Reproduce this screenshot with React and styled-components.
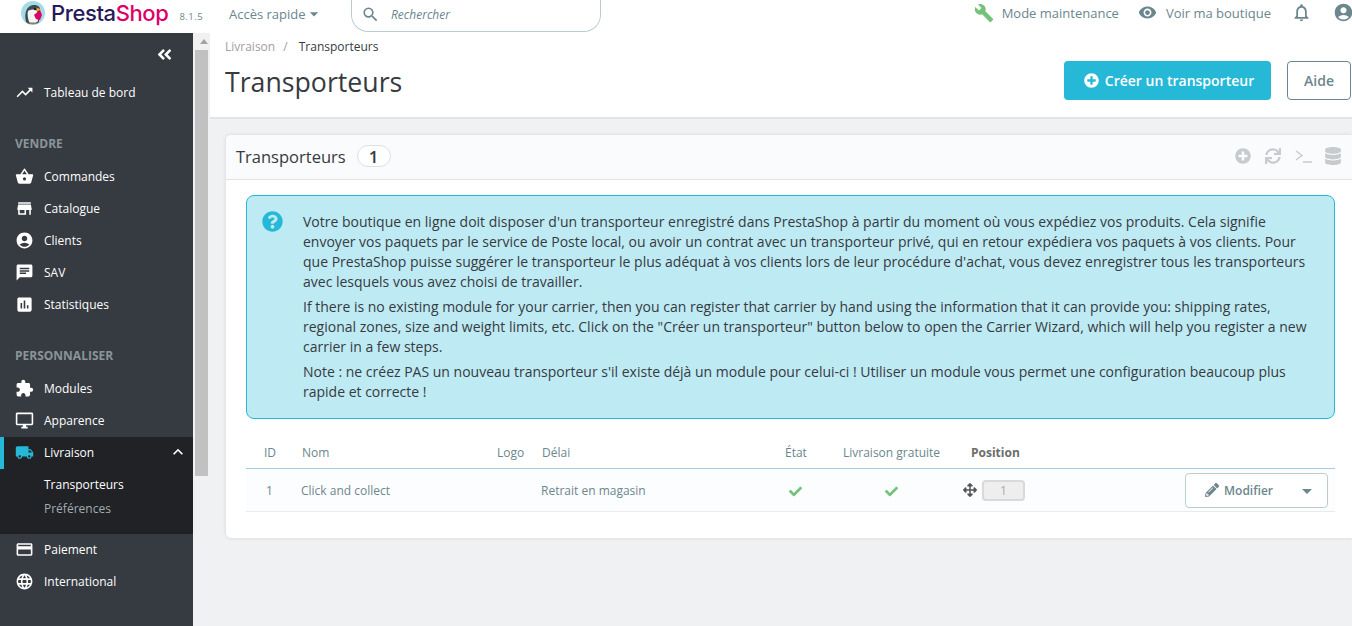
import React from "react";
import styled, { createGlobalStyle } from "styled-components";
import {
  MdTrendingUp,
  MdShoppingBasket,
  MdStore,
  MdAccountCircle,
  MdAssessment,
  MdExtension,
  MdOutlineDesktopWindows,
  MdLocalShipping,
  MdCreditCard,
  MdLanguage,
  MdBuild,
  MdVisibility,
  MdNotificationsNone,
  MdKeyboardArrowUp,
  MdSearch,
  MdArrowDropDown,
  MdChat,
} from "react-icons/md";
import {
  FaAngleDoubleLeft,
  FaPlusCircle,
  FaQuestionCircle,
  FaSync,
  FaDatabase,
  FaPencilAlt,
  FaCheck,
  FaArrowsAlt,
} from "react-icons/fa";

const GlobalStyle = createGlobalStyle`
  html, body {
    margin: 0;
    height: 100%;
    overflow: hidden;
    background: #eff1f2;
  }
  body {
    font-family: "Open Sans", "Liberation Sans", sans-serif;
    font-size: 12.5px;
    color: #363a41;
  }
  * { box-sizing: border-box; }
`;

const Page = styled.div`
  width: 1352px;
  height: 626px;
  display: flex;
  flex-direction: column;
  overflow: hidden;
`;

/* top bar */
const Header = styled.header`
  height: 33px;
  flex: none;
  background: #fff;
  display: flex;
  align-items: center;
  position: relative;
`;

const Logo = styled.div`
  width: 229px;
  flex: none;
  padding-left: 21px;
  margin-top: -8px;
  display: flex;
  align-items: center;
`;

const LogoName = styled.span`
  font-family: "Inter", "Open Sans", sans-serif;
  font-size: 22px;
  font-weight: 500;
  letter-spacing: -0.4px;
  color: #251b5b;
  margin-left: 6px;
  line-height: 28px;
  span { color: #df0067; }
`;

const Version = styled.span`
  font-size: 9.5px;
  letter-spacing: 0.5px;
  color: #6c868e;
  margin-left: 11px;
  margin-top: 7px;
`;

const QuickAccess = styled.div`
  width: 122px;
  flex: none;
  font-size: 13px;
  color: #6c868e;
  display: flex;
  align-items: center;
  margin-top: -6px;
  svg { margin-left: -2px; }
`;

const SearchBox = styled.div`
  width: 250px;
  height: 33px;
  flex: none;
  margin-top: -3px;
  border: 1px solid #bbcdd2;
  border-top: none;
  border-radius: 0 0 17px 17px;
  display: flex;
  align-items: center;
  padding-left: 9px;
  gap: 11px;
  font-size: 12px;
  font-style: italic;
  color: #6c868e;
  svg { font-size: 19px; }
`;

const HeaderRight = styled.div`
  margin-left: auto;
  display: flex;
  align-items: center;
  margin-top: -8px;
`;

const HeaderLink = styled.div`
  display: flex;
  align-items: center;
  gap: ${(p) => p.$gap || 8}px;
  margin-right: ${(p) => p.$right || 0}px;
  color: #6c868e;
  font-size: 13px;
  white-space: nowrap;
`;

/* body */
const Body = styled.div`
  flex: 1;
  display: flex;
  min-height: 0;
`;

const Sidebar = styled.nav`
  width: 193px;
  flex: none;
  background: #363a41;
  color: #fff;
  padding-top: 11px;
`;

const Collapse = styled.div`
  height: 20px;
  display: flex;
  justify-content: flex-end;
  align-items: center;
  padding-right: 20px;
  font-size: 17px;
  margin-bottom: 13px;
`;

const Item = styled.div`
  height: 32px;
  padding: 0 0 2px 16px;
  display: flex;
  align-items: center;
  font-size: 12px;
  color: #fff;
  position: relative;
  svg.main { font-size: 19px; margin-right: 10px; flex: none; margin-left: -1px; }
  ${(p) =>
    p.$active &&
    `
    background: #202226;
    border-left: 4px solid #25b9d7;
    padding-left: 12px;
    svg.main { color: #25b9d7; }
  `}
`;

const SectionTitle = styled.div`
  font-size: 12px;
  font-weight: 700;
  color: #8a9599;
  padding-left: 15px;
  line-height: 16px;
  margin: 27px 0 9px;
`;

const Chevron = styled(MdKeyboardArrowUp)`
  position: absolute;
  right: 5px;
  top: 5px;
  font-size: 20px;
`;

const SubMenu = styled.div`
  background: #202226;
  height: 65px;
  padding-top: 4px;
`;

const SubItem = styled.div`
  height: 24px;
  line-height: 24px;
  padding-left: 44px;
  font-size: 12px;
  color: ${(p) => (p.$current ? "#fff" : "#a2aeb1")};
`;

const TrackColumn = styled.div`
  width: 17px;
  flex: none;
  background: linear-gradient(#f1f1f1 0, #f1f1f1 85px, #eff1f2 85px);
`;

const ScrollArrow = styled.div`
  width: 0;
  height: 0;
  margin: 6px 0 0 7px;
  border-left: 4px solid transparent;
  border-right: 4px solid transparent;
  border-bottom: 5px solid #a3a3a3;
`;

const ScrollThumb = styled.div`
  width: 13px;
  height: 426px;
  margin: 6px 0 0 2px;
  background: #c1c1c1;
`;

const Main = styled.main`
  flex: 1;
  min-width: 0;
  display: flex;
  flex-direction: column;
`;

const PageHead = styled.div`
  height: 86px;
  flex: none;
  background: #fff;
  border-bottom: 2px solid #e2e4e6;
  padding: 5px 0 0 15px;
  position: relative;
`;

const Breadcrumb = styled.div`
  font-size: 12px;
  line-height: 17px;
  color: #a79c9c;
  span { margin: 0 8px 0 8px; }
  b { font-weight: 400; color: #363a41; }
`;

const PageTitle = styled.h1`
  margin: 8px 0 0;
  font-size: 26.7px;
  line-height: 38px;
  font-weight: 400;
  color: #363a41;
`;

const HeadActions = styled.div`
  position: absolute;
  top: 28px;
  right: 1px;
  display: flex;
  gap: 16px;
`;

const PrimaryButton = styled.div`
  width: 207px;
  height: 39px;
  padding-left: 3px;
  background: #25b9d7;
  color: #fff;
  border-radius: 4px;
  display: flex;
  align-items: center;
  justify-content: center;
  gap: 6px;
  font-size: 14px;
  font-weight: 600;
  svg { font-size: 15px; }
`;

const OutlineButton = styled.div`
  width: 64px;
  height: 39px;
  background: #fff;
  border: 1px solid #6c868e;
  border-radius: 4px;
  display: flex;
  align-items: center;
  justify-content: center;
  color: #6c868e;
  font-size: 14px;
  font-weight: 600;
`;

const Content = styled.div`
  padding: 16px 0 0 16px;
`;

const Panel = styled.section`
  height: 403px;
  background: #fff;
  border-radius: 5px 0 0 5px;
  box-shadow: 0 0 4px rgba(0, 0, 0, 0.12);
  overflow: hidden;
`;

const PanelHeading = styled.div`
  height: 45px;
  background: #fafbfc;
  border-bottom: 1px solid #dfe3e6;
  display: flex;
  align-items: center;
  padding: 0 10px 2px;
`;

const PanelTitle = styled.span`
  font-size: 16.5px;
  color: #363a41;
`;

const Badge = styled.span`
  margin-left: 11px;
  height: 22px;
  width: 34px;
  border: 1px solid #dfdfdf;
  border-radius: 11px;
  background: #fff;
  font-size: 17px;
  font-weight: 600;
  display: flex;
  align-items: center;
  justify-content: center;
`;

const PanelTools = styled.div`
  margin-left: auto;
  display: flex;
  align-items: center;
  color: #c8cbcd;
  gap: 14px;
`;

const PromptIcon = styled.svg`
  width: 17px;
  height: 14px;
  margin-right: -2px;
  fill: none;
  stroke: #c8cbcd;
  stroke-width: 1.4;
`;

const PanelBody = styled.div`
  padding: 15px 17px 0 20px;
`;

const Alert = styled.div`
  height: 224px;
  background: #beeaf3;
  border: 1px solid #25b9d7;
  border-radius: 8px;
  padding: 16px 16px 0 56px;
  position: relative;
  font-size: 14px;
  line-height: 20px;
  color: #363a41;
  p { margin: 0 0 5px; }
`;

const AlertIcon = styled(FaQuestionCircle)`
  position: absolute;
  left: 15px;
  top: 15px;
  font-size: 21px;
  color: #25b9d7;
`;

const Table = styled.div`
  margin-top: 17px;
`;

const Row = styled.div`
  display: grid;
  grid-template-columns: 56px 195px 45px 210px 88px 130px 1fr;
  align-items: center;
  font-size: 12px;
  color: #6c868e;
`;

const HeadRow = styled(Row)`
  height: 33px;
  border-bottom: 1px solid #a3cfe2;
`;

const DataRow = styled(Row)`
  height: 43px;
  background: #fcfdfe;
  border-bottom: 1px solid #e8eaec;
`;

const Cell = styled.div`
  padding-left: ${(p) => p.$left || 0}px;
  margin-left: ${(p) => p.$shift || 0}px;
  white-space: nowrap;
`;

const StrongCell = styled(Cell)`
  font-weight: 700;
  color: #6c6c6c;
`;

const Check = styled(FaCheck)`
  display: block;
  color: #72c279;
  font-size: 13px;
  margin-top: 2px;
`;

const PositionCell = styled.div`
  display: flex;
  align-items: center;
`;

const PositionWrap = styled.div`
  display: flex;
  align-items: center;
  gap: 5px;
  color: #555;
  margin-left: -7px;
  svg { font-size: 14px; }
`;

const PositionBox = styled.div`
  width: 43px;
  height: 21px;
  background: #eee;
  border: 2px solid #d9d9d9;
  border-radius: 4px;
  display: flex;
  align-items: center;
  justify-content: center;
  font-size: 12px;
  color: #aaa;
`;

const EditButton = styled.div`
  width: 143px;
  height: 35px;
  margin-left: auto;
  margin-right: 7px;
  background: #fff;
  border: 1px solid #bbcdd2;
  border-radius: 4px;
  display: flex;
  align-items: center;
  padding-left: 19px;
  gap: 5px;
  font-size: 12px;
  font-weight: 600;
  color: #6c868e;
  position: relative;
  svg { font-size: 14px; }
`;

const EditCaret = styled.span`
  position: absolute;
  right: 15px;
  top: 15px;
  border-left: 5px solid transparent;
  border-right: 5px solid transparent;
  border-top: 5px solid #6c868e;
`;

const Puffin = () => (
  <svg width="24" height="24" viewBox="0 0 24 24">
    <circle cx="12" cy="12" r="12" fill="#a5dbe8" />
    <path d="M5 21C3 13 5 5 12 4c4-.5 7 1.500 7 4l-1 13c-3 3-10 3-13 0z" fill="#3c4a52" />
    <path d="M7 10c3-2 8-2 9 0l1 10c-2 3-7 3-9 1-1-4-2-8-1-11z" fill="#f4f4f4" />
    <path d="M13 14l6-5 2 5-2 5-4-1z" fill="#df0067" />
    <circle cx="14" cy="8" r="1.200" fill="#1d1d1d" />
    <path d="M15.500 6.500l4.500 2-4 2z" fill="#f5a623" />
    <path d="M7 21.500h9l-1 1.500H9z" fill="#9a7b5a" />
  </svg>
);

const NavItem = ({ icon: Icon, label, active, children }) => (
  <Item $active={active}>
    <Icon className="main" />
    {label}
    {children}
  </Item>
);

const App = () => {
  return (
    <Page>
      <GlobalStyle />
      <Header>
        <Logo>
          <Puffin />
          <LogoName>
            Presta<span>Shop</span>
          </LogoName>
          <Version>8.1.5</Version>
        </Logo>
        <QuickAccess>
          Accès rapide
          <MdArrowDropDown size={20} />
        </QuickAccess>
        <SearchBox>
          <MdSearch />
          Rechercher
        </SearchBox>
        <HeaderRight>
          <HeaderLink $gap={8} $right={19}>
            <MdBuild size={20} color="#72c279" />
            Mode maintenance
          </HeaderLink>
          <HeaderLink $gap={9} $right={20}>
            <MdVisibility size={19} />
            Voir ma boutique
          </HeaderLink>
          <HeaderLink $right={21}>
            <MdNotificationsNone size={21} />
          </HeaderLink>
          <HeaderLink $right={-2}>
            <MdAccountCircle size={21} />
          </HeaderLink>
        </HeaderRight>
      </Header>

      <Body>
        <Sidebar>
          <Collapse>
            <FaAngleDoubleLeft />
          </Collapse>
          <NavItem icon={MdTrendingUp} label="Tableau de bord" />

          <SectionTitle>VENDRE</SectionTitle>
          <NavItem icon={MdShoppingBasket} label="Commandes" />
          <NavItem icon={MdStore} label="Catalogue" />
          <NavItem icon={MdAccountCircle} label="Clients" />
          <NavItem icon={MdChat} label="SAV" />
          <NavItem icon={MdAssessment} label="Statistiques" />

          <SectionTitle>PERSONNALISER</SectionTitle>
          <NavItem icon={MdExtension} label="Modules" />
          <NavItem icon={MdOutlineDesktopWindows} label="Apparence" />
          <NavItem icon={MdLocalShipping} label="Livraison" active>
            <Chevron />
          </NavItem>
          <SubMenu>
            <SubItem $current>Transporteurs</SubItem>
            <SubItem>Préférences</SubItem>
          </SubMenu>
          <NavItem icon={MdCreditCard} label="Paiement" />
          <NavItem icon={MdLanguage} label="International" />
        </Sidebar>

        <TrackColumn>
          <ScrollArrow />
          <ScrollThumb />
        </TrackColumn>

        <Main>
          <PageHead>
            <Breadcrumb>
              Livraison<span>/</span> <b>Transporteurs</b>
            </Breadcrumb>
            <PageTitle>Transporteurs</PageTitle>
            <HeadActions>
              <PrimaryButton>
                <FaPlusCircle />
                Créer un transporteur
              </PrimaryButton>
              <OutlineButton>Aide</OutlineButton>
            </HeadActions>
          </PageHead>

          <Content>
            <Panel>
              <PanelHeading>
                <PanelTitle>Transporteurs</PanelTitle>
                <Badge>1</Badge>
                <PanelTools>
                  <FaPlusCircle size={16} />
                  <FaSync size={16} />
                  <PromptIcon viewBox="0 0 17 14">
                    <path d="M1 2l6 4.500-6 4.500M8 13h9" />
                  </PromptIcon>
                  <FaDatabase size={18} />
                </PanelTools>
              </PanelHeading>

              <PanelBody>
                <Alert>
                  <AlertIcon />
                  <p>
                    Votre boutique en ligne doit disposer d'un transporteur enregistré dans PrestaShop à partir du moment où vous expédiez vos produits. Cela signifie envoyer vos paquets par le service de Poste local, ou avoir un contrat avec un transporteur privé, qui en retour expédiera vos paquets à vos clients. Pour que PrestaShop puisse suggérer le transporteur le plus adéquat à vos clients lors de leur procédure d'achat, vous devez enregistrer tous les transporteurs avec lesquels vous avez choisi de travailler.
                  </p>
                  <p>
                    If there is no existing module for your carrier, then you can register that carrier by hand using the information that it can provide you: shipping rates, regional zones, size and weight limits, etc. Click on the "Créer un transporteur" button below to open the Carrier Wizard, which will help you register a new carrier in a few steps.
                  </p>
                  <p>
                    Note : ne créez PAS un nouveau transporteur s'il existe déjà un module pour celui-ci ! Utiliser un module vous permet une configuration beaucoup plus rapide et correcte !
                  </p>
                </Alert>

                <Table>
                  <HeadRow>
                    <Cell $left={18}>ID</Cell>
                    <Cell>Nom</Cell>
                    <Cell>Logo</Cell>
                    <Cell>Délai</Cell>
                    <Cell $left={33}>État</Cell>
                    <Cell $left={3}>Livraison gratuite</Cell>
                    <StrongCell $left={1}>Position</StrongCell>
                  </HeadRow>
                  <DataRow>
                    <Cell $left={20}>1</Cell>
                    <Cell $shift={-1}>Click and collect</Cell>
                    <Cell />
                    <Cell $shift={-1}>Retrait en magasin</Cell>
                    <Cell $left={37}>
                      <Check />
                    </Cell>
                    <Cell $left={45}>
                      <Check />
                    </Cell>
                    <PositionCell>
                      <PositionWrap>
                        <FaArrowsAlt />
                        <PositionBox>1</PositionBox>
                      </PositionWrap>
                      <EditButton>
                        <FaPencilAlt />
                        Modifier
                        <EditCaret />
                      </EditButton>
                    </PositionCell>
                  </DataRow>
                </Table>
              </PanelBody>
            </Panel>
          </Content>
        </Main>
      </Body>
    </Page>
  );
};

export default App;
